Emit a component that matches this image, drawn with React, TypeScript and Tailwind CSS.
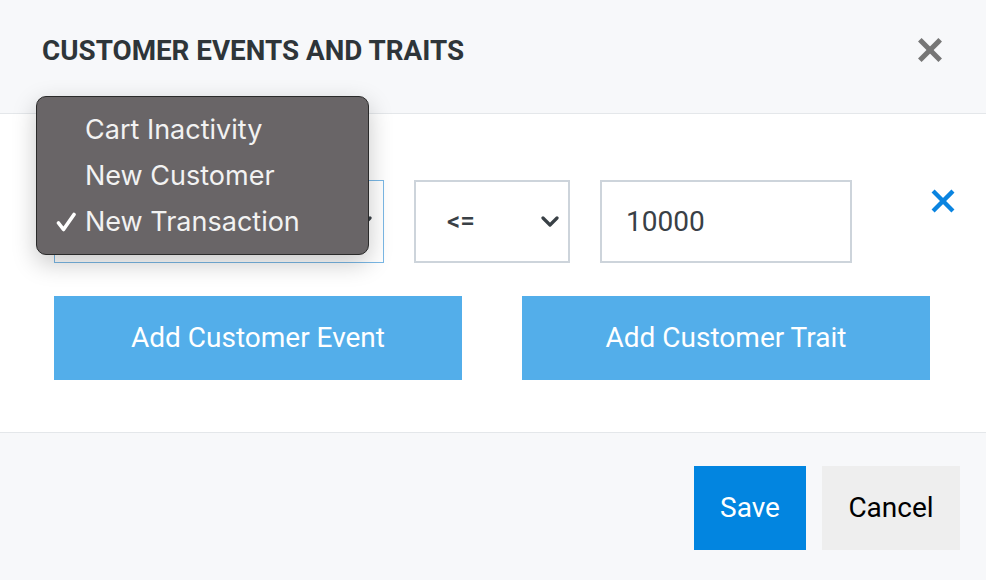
import React from "react";

const Chevron: React.FC = () => (
  <svg width="20" height="12" viewBox="0 0 20 12" className="shrink-0">
    <polyline points="3,2 10,9 17,2" fill="none" stroke="#394046" strokeWidth="3.2" strokeLinecap="round" strokeLinejoin="round" />
  </svg>
);

const Cross: React.FC<{ color: string; size: number; stroke: number }> = ({ color, size, stroke }) => (
  <svg width={size} height={size} viewBox="0 0 20 20">
    <line x1="3" y1="3" x2="17" y2="17" stroke={color} strokeWidth={stroke} strokeLinecap="square" />
    <line x1="17" y1="3" x2="3" y2="17" stroke={color} strokeWidth={stroke} strokeLinecap="square" />
  </svg>
);

const Check: React.FC = () => (
  <svg width="20" height="20" viewBox="0 0 20 20">
    <path d="M2.5 11 L7.5 17.5 L18 2.5" fill="none" stroke="#ffffff" strokeWidth="3.6" strokeLinecap="round" strokeLinejoin="round" />
  </svg>
);

const menuItems = [
  { label: "Cart Inactivity", checked: false },
  { label: "New Customer", checked: false },
  { label: "New Transaction", checked: true },
];

export default function App() {
  return (
    <div className="relative w-[986px] h-[580px] bg-white font-['Roboto',sans-serif] overflow-hidden">
      {/* header */}
      <header className="h-[114px] bg-[#f7f8fa] border-b border-[#e4e7ea] flex items-center justify-between pl-[42px] pr-[44px]">
        <h1 className="text-[27.8px] font-bold text-[#2e3539] pb-[12px]">CUSTOMER EVENTS AND TRAITS</h1>
        <button className="pb-[14px]">
          <Cross color="#767676" size={24} stroke={4.2} />
        </button>
      </header>

      {/* body */}
      <section className="h-[319px] border-b border-[#e4e7ea] pt-[66px] pl-[54px]">
        <div className="flex items-start">
          <div className="shrink-0 w-[330px] h-[83px] border border-[#7ab8e6] flex items-center justify-end pr-[10px]">
            <Chevron />
          </div>
          <div className="shrink-0 ml-[30px] w-[156px] h-[83px] border-2 border-[#cdd4db] flex items-center justify-between pl-[31px] pr-[8px]">
            <span className="text-[26px] text-[#394046] font-medium">&lt;=</span>
            <Chevron />
          </div>
          <div className="shrink-0 ml-[30px] w-[252px] h-[83px] border-2 border-[#cdd4db] flex items-center pl-[24px]">
            <span className="text-[28px] text-[#394046]">10000</span>
          </div>
          <button className="shrink-0 ml-[79px] mt-[9px]">
            <Cross color="#0a84e0" size={24} stroke={3.6} />
          </button>
        </div>
        <div className="flex gap-[60px] mt-[33px]">
          <button className="shrink-0 w-[408px] h-[84px] bg-[#53aeea] text-white text-[28px]">Add Customer Event</button>
          <button className="shrink-0 w-[408px] h-[84px] bg-[#53aeea] text-white text-[28px]">Add Customer Trait</button>
        </div>
      </section>

      {/* footer */}
      <footer className="h-[147px] bg-[#f7f8fa] flex justify-end items-start pt-[33px] pr-[26px] gap-[16px]">
        <button className="w-[112px] h-[84px] bg-[#0285e0] text-white text-[28px]">Save</button>
        <button className="w-[138px] h-[84px] bg-[#eeeeee] text-black text-[28px]">Cancel</button>
      </footer>

      {/* open native select menu */}
      <div className="absolute left-[36px] top-[96px] w-[333px] h-[159px] rounded-[10px] bg-[#696567] border border-[#2a2a2a] shadow-[0_8px_24px_rgba(0,0,0,0.22)] py-[10px] font-['Inter',sans-serif]">
        {menuItems.map((item) => (
          <div key={item.label} className="h-[46px] flex items-center text-[#f2f2f2] text-[27px]">
            <span className="w-[48px] flex justify-end pr-[9px]">{item.checked ? <Check /> : null}</span>
            <span>{item.label}</span>
          </div>
        ))}
      </div>
    </div>
  );
}
